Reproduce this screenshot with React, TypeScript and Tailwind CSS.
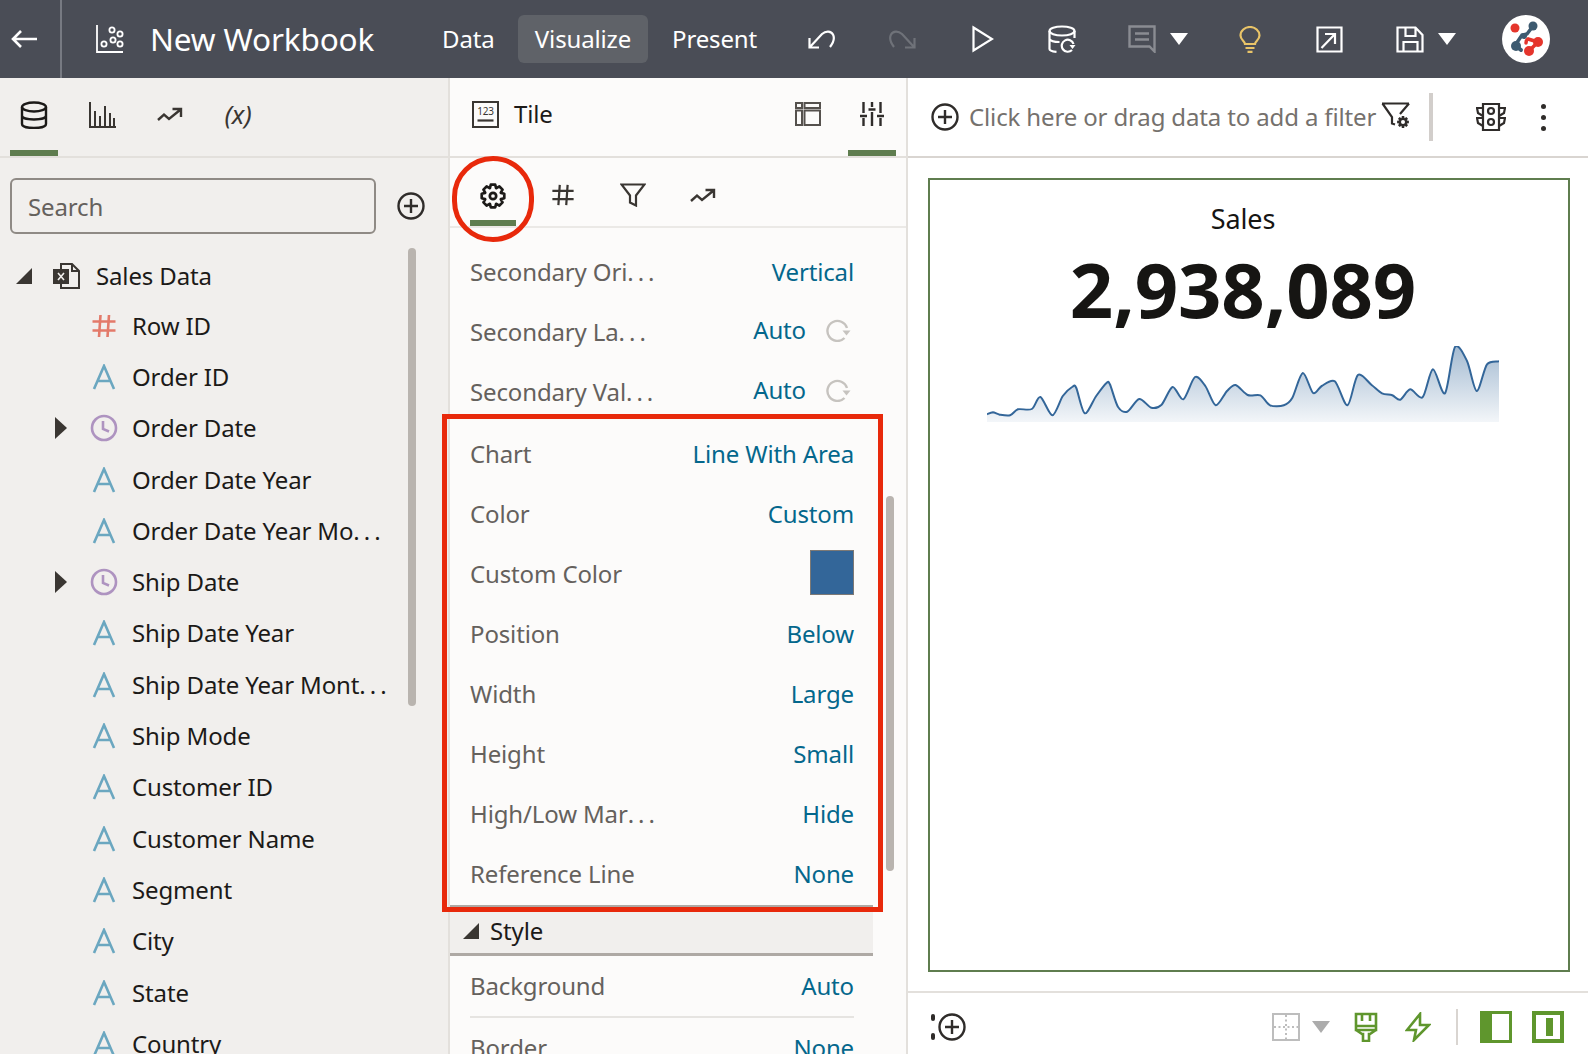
import React from "react";

const pts: [number, number][] = [
  [78, 285], [95, 279], [115, 286], [145, 288], [168, 270], [208, 269], [233, 233], [268, 288], [298, 230], [325, 203], [337, 205], [362, 282], [395, 230], [425, 191], [435, 195], [458, 262], [485, 277], [520, 239], [555, 265], [585, 256], [617, 203], [648, 240], [682, 173], [712, 200], [742, 258], [775, 215], [800, 197], [835, 227], [872, 228], [900, 258], [940, 258], [965, 235], [995, 161], [1025, 221], [1050, 200], [1088, 186], [1125, 258], [1155, 167], [1195, 197], [1225, 222], [1255, 228], [1278, 241], [1307, 210], [1343, 234], [1373, 150], [1408, 222], [1437, 83], [1472, 125], [1500, 215], [1530, 135], [1565, 126],
];

// reference crop coordinates -> sparkline box (512 x 76)
const sx = (x: number) => (x - 78) / 2.904;
const sy = (y: number) => (y - 83) / 3 + 1;

const linePath = () => {
  const p = pts.map(([x, y]) => [sx(x), sy(y)]);
  let d = `M${p[0][0].toFixed(1)} ${p[0][1].toFixed(1)}`;
  for (let i = 0; i < p.length - 1; i++) {
    const a = p[Math.max(i - 1, 0)];
    const b = p[i];
    const c = p[i + 1];
    const e = p[Math.min(i + 2, p.length - 1)];
    const c1 = [b[0] + (c[0] - a[0]) / 7, b[1] + (c[1] - a[1]) / 7];
    const c2 = [c[0] - (e[0] - b[0]) / 7, c[1] - (e[1] - b[1]) / 7];
    d += `C${c1[0].toFixed(1)} ${c1[1].toFixed(1)} ${c2[0].toFixed(1)} ${c2[1].toFixed(1)} ${c[0].toFixed(1)} ${c[1].toFixed(1)}`;
  }
  return d;
};

const gearPath = (cx: number, cy: number, r1: number, r2: number, n = 8) => {
  let d = "";
  for (let i = 0; i < n; i++) {
    const t = (i / n) * Math.PI * 2;
    const w = Math.PI / n;
    const at = (r: number, a: number) => `${(cx + r * Math.cos(a)).toFixed(2)} ${(cy + r * Math.sin(a)).toFixed(2)}`;
    d += `${i ? "L" : "M"}${at(r2, t - w * 0.95)}L${at(r1, t - w * 0.5)}L${at(r1, t + w * 0.5)}L${at(r2, t + w * 0.95)}`;
  }
  return d + "Z";
};

const Ico = ({ w = 30, h = 30, vb = "0 0 30 30", c = "#2f2c2a", sw = 2, children }: { w?: number; h?: number; vb?: string; c?: string; sw?: number; children: React.ReactNode }) => (
  <svg width={w} height={h} viewBox={vb} fill="none" stroke={c} strokeWidth={sw} className="shrink-0">
    {children}
  </svg>
);

const PlusCircle = ({ size = 28 }: { size?: number }) => (
  <Ico w={size} h={size} vb="0 0 28 28" sw={2.4}>
    <circle cx="14" cy="14" r="12.500" />
    <path d="M14 7v14M7 14h14" />
  </Ico>
);

const Trend = ({ c = "#2f2c2a" }: { c?: string }) => (
  <Ico w={26} h={16} vb="0 0 26 16" c={c} sw={2.4}>
    <path d="M1 13l6-5.500 5 4.500L23 3M15.500 2H24v8" />
  </Ico>
);

const Gear = () => (
  <Ico w={26} h={26} vb="0 0 26 26" c="#1c1a18" sw={2.700}>
    <circle cx="13" cy="13" r="3.200" />
    <path d={gearPath(13, 13, 11.500, 8.500)} strokeLinejoin="round" />
  </Ico>
);

const Funnel = ({ c = "#3a3632" }: { c?: string }) => (
  <Ico w={26} h={24} vb="0 0 26 24" c={c} sw={2.2}>
    <path d="M1.500 1.500h23L16 12.500v10l-6-3v-7z" />
  </Ico>
);

const Refresh = () => (
  <svg width="26" height="24" viewBox="0 0 26 24" fill="none" stroke="#c6c3bf" strokeWidth="2.400" className="shrink-0">
    <path d="M21 10A10 10 0 1 0 18.500 20" />
    <path d="M16.500 12.500h8l-4 5z" fill="#c6c3bf" stroke="none" />
  </svg>
);

const Caret = ({ c = "#ffffff" }: { c?: string }) => (
  <svg width="18" height="12" viewBox="0 0 18 12" className="shrink-0"><path d="M0 0h18L9 12z" fill={c} /></svg>
);

const Corner = () => (
  <svg width="16" height="16" viewBox="0 0 16 16" className="shrink-0"><path d="M16 0v16H0z" fill="#3a3632" /></svg>
);

const Hash = ({ c, size = 26, sw = 2.6 }: { c: string; size?: number; sw?: number }) => (
  <Ico w={size} h={size} vb="0 0 26 26" c={c} sw={sw}>
    <path d="M9.500 2L8 24M18 2l-1.500 22M1.500 8.500h23M1.500 17.500h23" />
  </Ico>
);

const LetterA = () => (
  <Ico w={24} h={26} vb="0 0 24 26" c="#6ba7c0" sw={2.6}>
    <path d="M2 25L12 2l10 23M5.500 17h13" />
  </Ico>
);

const Clock = () => (
  <Ico w={28} h={28} vb="0 0 28 28" c="#ae93c0" sw={2.6}>
    <circle cx="14" cy="14" r="12" />
    <path d="M13 7v8l6 2.500" />
  </Ico>
);

// the app draws its ellipsis with wide spaced dots
const Cut = ({ text }: { text: string }) => (
  <span className="whitespace-nowrap">
    {text}
    <span className="tracking-[4px]">...</span>
  </span>
);

type Field = { name: string; kind: "hash" | "text" | "date"; cut?: boolean };

const fields: Field[] = [
  { name: "Row ID", kind: "hash" },
  { name: "Order ID", kind: "text" },
  { name: "Order Date", kind: "date" },
  { name: "Order Date Year", kind: "text" },
  { name: "Order Date Year Mo", kind: "text", cut: true },
  { name: "Ship Date", kind: "date" },
  { name: "Ship Date Year", kind: "text" },
  { name: "Ship Date Year Mont", kind: "text", cut: true },
  { name: "Ship Mode", kind: "text" },
  { name: "Customer ID", kind: "text" },
  { name: "Customer Name", kind: "text" },
  { name: "Segment", kind: "text" },
  { name: "City", kind: "text" },
  { name: "State", kind: "text" },
  { name: "Country", kind: "text" },
];

const PropRow = ({ label, value, refresh, cut }: { label: string; value?: string; refresh?: boolean; cut?: boolean }) => (
  <div className="h-[60px] flex items-center justify-between text-[24px]">
    <span className="text-[#65615d]">{cut ? <Cut text={label} /> : label}</span>
    {refresh ? (
      <span className="flex items-center text-[#04678c] pb-[4px]">
        {value}
        <span className="ml-[20px] mr-[2px] flex"><Refresh /></span>
      </span>
    ) : (
      <span className="text-[#04678c]">{value}</span>
    )}
  </div>
);

function TopBar() {
  return (
    <div className="h-[78px] shrink-0 bg-[#4a4d56] flex items-center text-white">
      <div className="w-[62px] h-full border-r-2 border-[#777a82] flex items-center justify-center pr-[12px]">
        <Ico w={26} h={20} vb="0 0 26 20" c="#fff" sw={2.6}>
          <path d="M26 10H2M10 2l-8 8 8 8" />
        </Ico>
      </div>
      <div className="ml-[33px] flex">
        <Ico w={30} h={30} vb="0 0 30 30" c="#fff" sw={1.8}>
          <path d="M2 1v27h26" />
          <circle cx="9" cy="20" r="2.600" />
          <circle cx="17" cy="6" r="2.600" />
          <circle cx="18" cy="16" r="2.600" />
          <circle cx="25" cy="10" r="2.600" />
          <circle cx="25" cy="20" r="2.600" />
        </Ico>
      </div>
      <span className="ml-[25px] text-[31.5px] w-[292px] whitespace-nowrap">New Workbook</span>
      <span className="text-[24px] w-[76px]">Data</span>
      <span className="text-[24px] w-[130px] h-[48px] bg-[#5f6268] rounded-[6px] flex items-center justify-center">Visualize</span>
      <span className="text-[24px] ml-[24px] w-[136px]">Present</span>
      <Ico w={28} h={20} vb="0 0 28 20" c="#fff" sw={2.2}>
        <path d="M1.500 9v9.500H11M1.500 18.500L14 5c4-3.500 9-3 11 .5 1.500 3 .5 8-3 12.500" />
      </Ico>
      <div className="ml-[52px] flex">
        <Ico w={28} h={20} vb="0 0 28 20" c="#6f7279" sw={2.2}>
          <path d="M26.500 9v9.500H17M26.500 18.500L14 5C10 1.500 5 2 3 5.500c-1.500 3-.5 8 3 12.500" />
        </Ico>
      </div>
      <div className="ml-[56px] flex">
        <Ico w={22} h={28} vb="0 0 22 28" c="#fff" sw={2.2}>
          <path d="M1.500 2.500L20 14 1.500 25.500z" />
        </Ico>
      </div>
      <div className="ml-[54px] flex">
        <Ico w={28} h={28} vb="0 0 28 28" c="#fff" sw={2.2}>
          <ellipse cx="14" cy="6" rx="12.500" ry="4.500" />
          <path d="M1.500 6v18c0 1.500 3 2.500 7 2.800M26.500 6v7M1.500 14c1 2 5 3 10 3M1.500 6" />
          <path d="M25.500 19a6 6 0 1 0-1.500 6" />
          <path d="M21.500 20h6l-3 4z" fill="#fff" stroke="none" />
        </Ico>
      </div>
      <div className="ml-[52px] flex">
        <Ico w={28} h={28} vb="0 0 28 28" c="#8a8c92" sw={2.4}>
          <path d="M1.500 1.500h25v25l-5-5h-20z" />
          <path d="M7 8.500h14M7 14.500h14" />
        </Ico>
      </div>
      <span className="ml-[14px] flex"><Caret /></span>
      <div className="ml-[51px] flex">
        <Ico w={22} h={27} vb="0 0 22 27" c="#e9c468" sw={2.2}>
          <path d="M6 18c0-3-4.500-4-4.500-8.500a9.500 8.500 0 0 1 19 0c0 4.500-4.500 5.500-4.500 8.500zM6.500 22h9M8.500 25.800h5" />
        </Ico>
      </div>
      <div className="ml-[55px] flex">
        <Ico w={27} h={27} vb="0 0 27 27" c="#fff" sw={2.2}>
          <path d="M1.500 1.500h24v24h-24zM5.500 22L18.500 8.500M9 8h10v10" />
        </Ico>
      </div>
      <div className="ml-[53px] flex">
        <Ico w={28} h={27} vb="0 0 28 27" c="#fff" sw={2.2}>
          <path d="M1.500 1.500h18l7 7.500v16.500H1.500zM9.500 1.500v8.500h10V1.500M7.500 25.500V16h14v9.500" />
        </Ico>
      </div>
      <span className="ml-[14px] flex"><Caret /></span>
      <div className="ml-[46px] w-[48px] h-[48px] rounded-full bg-white flex items-center justify-center">
        <svg width="48" height="48" viewBox="0 0 48 48" fill="none" strokeLinecap="round">
          <path d="M31 11l-6 8-5 1-6 9" stroke="#3d5a70" strokeWidth="3.500" />
          <circle cx="31" cy="11" r="4.500" fill="#3d5a70" />
          <circle cx="22" cy="21" r="3" fill="#3d5a70" />
          <circle cx="14" cy="31" r="5" fill="#3d5a70" />
          <path d="M14 31l5 4" stroke="#3d5a70" strokeWidth="4" />
          <circle cx="13" cy="13" r="4.500" fill="#e5352c" />
          <path d="M36 27l-10-3c-2 1-2 2-2 4M36 27l-9 9" stroke="#e5352c" strokeWidth="3.500" />
          <circle cx="36" cy="27" r="5" fill="#e5352c" />
          <circle cx="27" cy="36" r="5" fill="#e5352c" />
        </svg>
      </div>
    </div>
  );
}

function DataPanel() {
  return (
    <div className="w-[450px] shrink-0 bg-[#f1efed] border-r-2 border-[#e3e0dc] flex flex-col">
      <div className="h-[80px] shrink-0 border-b-2 border-[#e3e0dc] pl-[10px] flex gap-[20px]">
        <div className="w-[48px] border-b-[6px] border-[#5f7d4f] flex items-center justify-center pt-[2px]">
          <Ico w={28} h={28} vb="0 0 28 28" c="#1c1a18" sw={2.4}>
            <ellipse cx="14" cy="6" rx="12" ry="4.500" />
            <path d="M2 6v17c0 2.500 5 4 12 4s12-1.500 12-4V6M2 14.500c0 2.500 5 4 12 4s12-1.500 12-4" />
          </Ico>
        </div>
        <div className="w-[48px] flex items-center justify-center pb-[4px]">
          <Ico w={28} h={28} vb="0 0 28 28" c="#3a3632" sw={2}>
            <path d="M2 1v25h26M7 26V10M12 26V15M17 26V5M22 26V12M26 26V17" />
          </Ico>
        </div>
        <div className="w-[48px] flex items-center justify-center pb-[4px]"><Trend c="#3a3632" /></div>
        <div className="w-[48px] flex items-center justify-center pb-[6px] text-[26px] italic text-[#3a3632]">(x)</div>
      </div>
      <div className="shrink-0 h-[76px] pl-[10px] pr-[20px] flex items-center">
        <input
          placeholder="Search"
          className="w-[366px] h-[56px] rounded-[6px] border-2 border-[#8f8a85] bg-transparent px-[16px] text-[24px] placeholder:text-[#65615d] mt-[20px]"
        />
        <span className="ml-[21px] mt-[20px] flex"><PlusCircle /></span>
      </div>
      <div className="flex-1 min-h-0 flex overflow-hidden">
        <div className="w-[408px] shrink-0 pt-[18px]">
          <div className="h-[48px] pl-[16px] flex items-center text-[24px] text-[#1c1a18]">
            <Corner />
            <span className="ml-[21px] mr-[15px] flex">
              <Ico w={28} h={28} vb="0 0 28 28" c="#3a3632" sw={2}>
                <path d="M8 7V2h11l7 7v17H8v-4M19 2v7h7" />
                <path d="M1 8h14v13H1z" fill="#3a3632" />
                <path d="M5 11l6 7M11 11l-6 7" stroke="#f1efed" strokeWidth="1.600" />
              </Ico>
            </span>
            Sales Data
          </div>
          {fields.map((f) => (
            <div key={f.name} className="h-[51.3px] pl-[55px] flex items-center text-[24px] text-[#1c1a18]">
              <span className="w-[34px] flex">
                {f.kind === "date" && (
                  <svg width="12" height="22" viewBox="0 0 12 22"><path d="M0 0l12 11L0 22z" fill="#3a3632" /></svg>
                )}
              </span>
              <span className="w-[30px] flex justify-center">
                {f.kind === "hash" && <Hash c="#e37a6a" />}
                {f.kind === "text" && <LetterA />}
                {f.kind === "date" && <Clock />}
              </span>
              <span className="ml-[13px]">{f.cut ? <Cut text={f.name} /> : f.name}</span>
            </div>
          ))}
        </div>
        <div className="w-[8px] h-[458px] mt-[14px] rounded-[4px] bg-[#b9b4af]" />
      </div>
    </div>
  );
}

function PropsPanel() {
  return (
    <div className="w-[458px] shrink-0 bg-[#fcfbfa] border-r-2 border-[#e3e0dc] flex flex-col">
      <div className="h-[80px] shrink-0 border-b-2 border-[#e3e0dc] flex">
        <div className="flex items-center pb-[6px] pl-[22px]">
          <svg width="27" height="27" viewBox="0 0 27 27" className="shrink-0">
            <rect x="1" y="1" width="25" height="25" fill="none" stroke="#3a3632" strokeWidth="2" />
            <text x="13.500" y="14" textAnchor="middle" fontSize="10" fill="#3a3632">123</text>
            <path d="M5.500 19.500h16" stroke="#3a3632" strokeWidth="2.200" />
          </svg>
          <span className="ml-[15px] text-[24px] text-[#1c1a18]">Tile</span>
        </div>
        <div className="ml-auto flex items-center pb-[6px] mr-[27px]">
          <Ico w={26} h={24} vb="0 0 26 24" c="#55514d" sw={2}>
            <path d="M1 1h6v5H1zM1 8.500h6v14.500H1zM9.500 1H25v5H9.500zM9.500 8.500H25V23H9.500z" />
          </Ico>
        </div>
        <div className="w-[48px] mr-[10px] border-b-[6px] border-[#5f7d4f] flex items-center justify-center">
          <Ico w={24} h={24} vb="0 0 24 24" c="#2f2c2a" sw={2.4}>
            <path d="M3.500 0v11M3.500 16v8M12 0v5M12 10v14M20.500 0v11M20.500 16v8M0 14h7M8.500 7.500h7M17 14h7" />
          </Ico>
        </div>
      </div>
      <div className="h-[70px] shrink-0 border-b-2 border-[#ebe9e6] pl-[20px] flex gap-[24px]">
        <div className="w-[46px] border-b-[6px] border-[#5f7d4f] flex items-center justify-center pt-[14px]"><Gear /></div>
        <div className="w-[46px] flex items-center justify-center pt-[6px]"><Hash c="#3a3632" size={24} sw={2.4} /></div>
        <div className="w-[46px] flex items-center justify-center pt-[6px]"><Funnel /></div>
        <div className="w-[46px] flex items-center justify-center pt-[7px]"><Trend c="#3a3632" /></div>
      </div>
      <div className="flex-1 min-h-0 flex overflow-hidden">
        <div className="w-[423px] shrink-0 pt-[14px]">
          <div className="pl-[20px] pr-[19px] pb-[2px]">
            <PropRow label="Secondary Ori" cut value="Vertical" />
            <PropRow label="Secondary La" cut value="Auto" refresh />
            <PropRow label="Secondary Val" cut value="Auto" refresh />
          </div>
          <div className="pl-[20px] pr-[19px] pb-[1px] border-b-[3px] border-[#aea9a4]">
            <PropRow label="Chart" value="Line With Area" />
            <PropRow label="Color" value="Custom" />
            <div className="h-[60px] flex items-center justify-between text-[24px]">
              <span className="text-[#65615d]">Custom Color</span>
              <span className="w-[44px] h-[45px] mb-[3px] bg-[#336699] border border-[#7d7975]" />
            </div>
            <PropRow label="Position" value="Below" />
            <PropRow label="Width" value="Large" />
            <PropRow label="Height" value="Small" />
            <PropRow label="High/Low Mar" cut value="Hide" />
            <PropRow label="Reference Line" value="None" />
          </div>
          <div className="h-[48px] bg-[#f1efed] border-b-[3px] border-[#aea9a4] pl-[13px] flex items-center text-[24px] text-[#1c1a18]">
            <Corner />
            <span className="ml-[11px]">Style</span>
          </div>
          <div className="pl-[20px] pr-[19px]">
            <div className="border-b-2 border-[#e6e4e1]"><PropRow label="Background" value="Auto" /></div>
            <PropRow label="Border" value="None" />
          </div>
        </div>
        <div className="w-[8px] h-[375px] mt-[268px] ml-[13px] rounded-[4px] bg-[#b9b4af]" />
      </div>
    </div>
  );
}

function Canvas() {
  const line = linePath();
  return (
    <div className="flex-1 min-w-0 bg-white flex flex-col">
      <div className="h-[80px] shrink-0 border-b-2 border-[#d9d5d1] flex items-center pl-[23px]">
        <PlusCircle />
        <span className="ml-[10px] text-[24px] text-[#75716d] w-[412px] whitespace-nowrap">Click here or drag data to add a filter</span>
        <Ico w={30} h={30} vb="0 0 30 30" c="#2f2c2a" sw={2.2}>
          <path d="M1 1.500h27M1.500 1.500L11 15v6.500l3 1M28 1.500L19 12" />
          <path d={gearPath(22, 20, 6, 4.200)} fill="#2f2c2a" stroke="none" />
          <circle cx="22" cy="20" r="2" fill="#fff" stroke="none" />
        </Ico>
        <span className="ml-[18px] w-[4px] h-[48px] bg-[#d2cecb]" />
        <span className="ml-[43px] flex">
          <Ico w={30} h={30} vb="0 0 30 30" c="#2f2c2a" sw={2.2}>
            <path d="M7 2h16v26H7z" />
            <path d="M7 6H1l1 5 5 3M23 6h6l-1 5-5 3M7 16H1l1 5 5 3M23 16h6l-1 5-5 3" />
            <circle cx="15" cy="9" r="3" />
            <circle cx="15" cy="20" r="3" />
          </Ico>
        </span>
        <span className="ml-[35px] flex flex-col gap-[6px]">
          <span className="w-[5px] h-[5px] rounded-full bg-[#2f2c2a]" />
          <span className="w-[5px] h-[5px] rounded-full bg-[#2f2c2a]" />
          <span className="w-[5px] h-[5px] rounded-full bg-[#2f2c2a]" />
        </span>
      </div>
      <div className="flex-1 min-h-0 pl-[20px] pr-[18px] pt-[20px] pb-[19px] border-b-2 border-[#e3e0dc]">
        <div className="h-full border-2 border-[#5f7d4f] flex flex-col items-center pr-[12px]">
          <div className="mt-[21px] text-[27px] leading-[36px] text-[#161513]">Sales</div>
          <div className="mt-[12px] text-[76px] leading-[80px] font-bold text-[#161513]">2,938,089</div>
          <svg width="512" height="76" viewBox="0 0 512 76" className="mt-[17px]">
            <defs>
              <linearGradient id="area" x1="0" y1="0" x2="0" y2="1">
                <stop offset="0" stopColor="#336699" stopOpacity="0.45" />
                <stop offset="1" stopColor="#336699" stopOpacity="0.06" />
              </linearGradient>
            </defs>
            <path d={`${line}L512 76L0 76Z`} fill="url(#area)" />
            <path d={line} fill="none" stroke="#336699" strokeWidth="2" />
          </svg>
        </div>
      </div>
      <div className="h-[61px] shrink-0 flex items-center pl-[30px] pr-[24px] pt-[7px]">
        <span className="relative flex">
          <PlusCircle />
          <span className="absolute left-[-7px] top-[1px] w-[4px] h-[7px] rounded-full bg-[#2f2c2a]" />
          <span className="absolute left-[-7px] bottom-[1px] w-[4px] h-[7px] rounded-full bg-[#2f2c2a]" />
        </span>
        <span className="ml-auto flex">
          <Ico w={28} h={28} vb="0 0 28 28" c="#bdbdbd" sw={2}>
            <path d="M1 1h26v26H1z" />
            <path d="M14 2v24M2 14h24" strokeDasharray="2 2.500" />
          </Ico>
        </span>
        <span className="ml-[12px] flex"><Caret c="#acacac" /></span>
        <span className="ml-[24px] flex">
          <Ico w={24} h={30} vb="0 0 24 30" c="#5f962d" sw={2.6}>
            <path d="M2 2h20v16H2zM2 14h20M8 2v7M16 2v7M2 18l6 4h1v7h6v-7h1l6-4" />
          </Ico>
        </span>
        <span className="ml-[27px] flex">
          <Ico w={26} h={30} vb="0 0 26 30" c="#5f962d" sw={2.6}>
            <path d="M15 2L2 18h9l-2 10 15-15h-9z" />
          </Ico>
        </span>
        <span className="ml-[25px] w-[2px] h-[36px] bg-[#d9d5d1]" />
        <span className="ml-[22px] w-[32px] h-[32px] bg-white border-[3px] border-[#5f962d] border-l-[12px]" />
        <span className="ml-[20px] w-[32px] h-[32px] bg-white border-[4px] border-[#5f962d] flex justify-center">
          <span className="w-[7px] ml-[2px] bg-[#5f962d] my-[3px]" />
        </span>
      </div>
    </div>
  );
}

export default function App() {
  return (
    <div className="relative w-[1588px] h-[1054px] overflow-hidden flex flex-col tracking-[-0.14px] font-['Open_Sans','Noto_Sans',sans-serif]">
      <TopBar />
      <div className="flex-1 min-h-0 flex">
        <DataPanel />
        <PropsPanel />
        <Canvas />
      </div>
      {/* annotations drawn on top of the screenshot */}
      <div className="absolute left-[452px] top-[156px] w-[82px] h-[86px] rounded-full border-[5px] border-[#e8290b]" />
      <div className="absolute left-[442px] top-[414px] w-[441px] h-[498px] border-[5px] border-[#e8290b]" />
    </div>
  );
}
